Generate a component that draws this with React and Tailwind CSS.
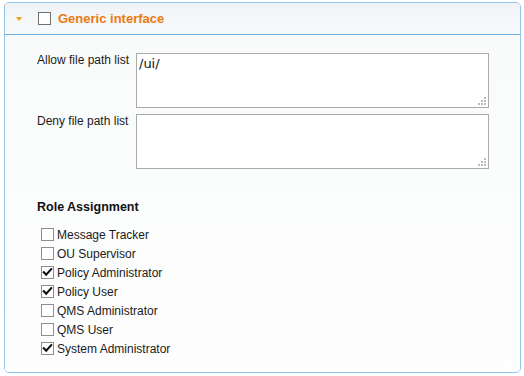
import React from "react";

const roles = [
  ["Message Tracker", false],
  ["OU Supervisor", false],
  ["Policy Administrator", true],
  ["Policy User", true],
  ["QMS Administrator", false],
  ["QMS User", false],
  ["System Administrator", true],
];

function Box({ checked, dark }) {
  return (
    <span
      className={
        "flex h-[13px] w-[13px] shrink-0 items-center justify-center border bg-white " +
        (dark ? "border-[#6f6f6f]" : "border-[#8e8e8e]")
      }
    >
      {checked && (
        <svg width="11" height="11" viewBox="0 0 11 11">
          <path d="M1.8 5.2 L4.2 7.8 L9.2 2.2" fill="none" stroke="#111" strokeWidth="2.1" strokeLinecap="square" />
        </svg>
      )}
    </span>
  );
}

function Grip() {
  const dots = [
    [6, 0],
    [3, 3],
    [6, 3],
    [0, 6],
    [3, 6],
    [6, 6],
  ];
  return (
    <svg className="absolute bottom-[3px] right-[3px]" width="8" height="8" viewBox="0 0 8 8">
      {dots.map(([x, y], i) => (
        <rect key={i} x={x} y={y} width="2" height="2" fill="#bdbdbd" />
      ))}
    </svg>
  );
}

function Field({ label, value }) {
  return (
    <div className="flex items-start">
      <div className="w-[99px] shrink-0 text-[12px] leading-[15px] text-[#1b1b1b]">{label}</div>
      <div className="relative h-[55px] flex-1">
        <textarea
          defaultValue={value}
          className="block h-full w-full resize-none border border-[#ababab] bg-white px-[2px] py-[2px] text-[13px] leading-[15px] text-[#111] outline-none"
          style={{ fontFamily: '"DejaVu Sans", sans-serif' }}
        />
        <Grip />
      </div>
    </div>
  );
}

export default function App() {
  return (
    <div
      className="h-[376px] w-[524px] bg-white pl-[4px] pt-[2px]"
      style={{ fontFamily: '"Liberation Sans", Arial, sans-serif' }}
    >
      <div className="flex h-[371px] w-[517px] flex-col overflow-hidden rounded-[5px] border border-[#93c4ea]">
        <div className="flex h-[32px] shrink-0 items-center border-b border-[#74b2e3] bg-gradient-to-b from-[#f0f3f6] to-[#f8fafb]">
          <span className="ml-[11px] h-0 w-0 border-l-[3px] border-r-[3px] border-t-[4px] border-l-transparent border-r-transparent border-t-[#e9a50f]" />
          <span className="ml-[16px]">
            <Box dark />
          </span>
          <span className="ml-[7px] text-[13px] font-bold leading-[15px] text-[#ea7a12]">Generic interface</span>
        </div>
        <div className="flex-1 bg-gradient-to-b from-[#f9fbfb] to-[#fefefe] pl-[32px] pr-[31px] pt-[18px]">
          <div className="flex flex-col gap-[6px]">
            <Field label="Allow file path list" value="/ui/" />
            <Field label="Deny file path list" value="" />
          </div>
          <div className="mt-[31px] text-[12.5px] font-bold leading-[15px] text-[#111]">Role Assignment</div>
          <div className="mt-[10px] flex flex-col pl-[4px]">
            {roles.map(([name, checked]) => (
              <div key={name} className="flex h-[19px] items-start">
                <span className="mt-[3px]">
                  <Box checked={checked} />
                </span>
                <span className="ml-[3px] mt-[1px] text-[12px] leading-[19px] text-[#1b1b1b]">{name}</span>
              </div>
            ))}
          </div>
        </div>
      </div>
    </div>
  );
}
